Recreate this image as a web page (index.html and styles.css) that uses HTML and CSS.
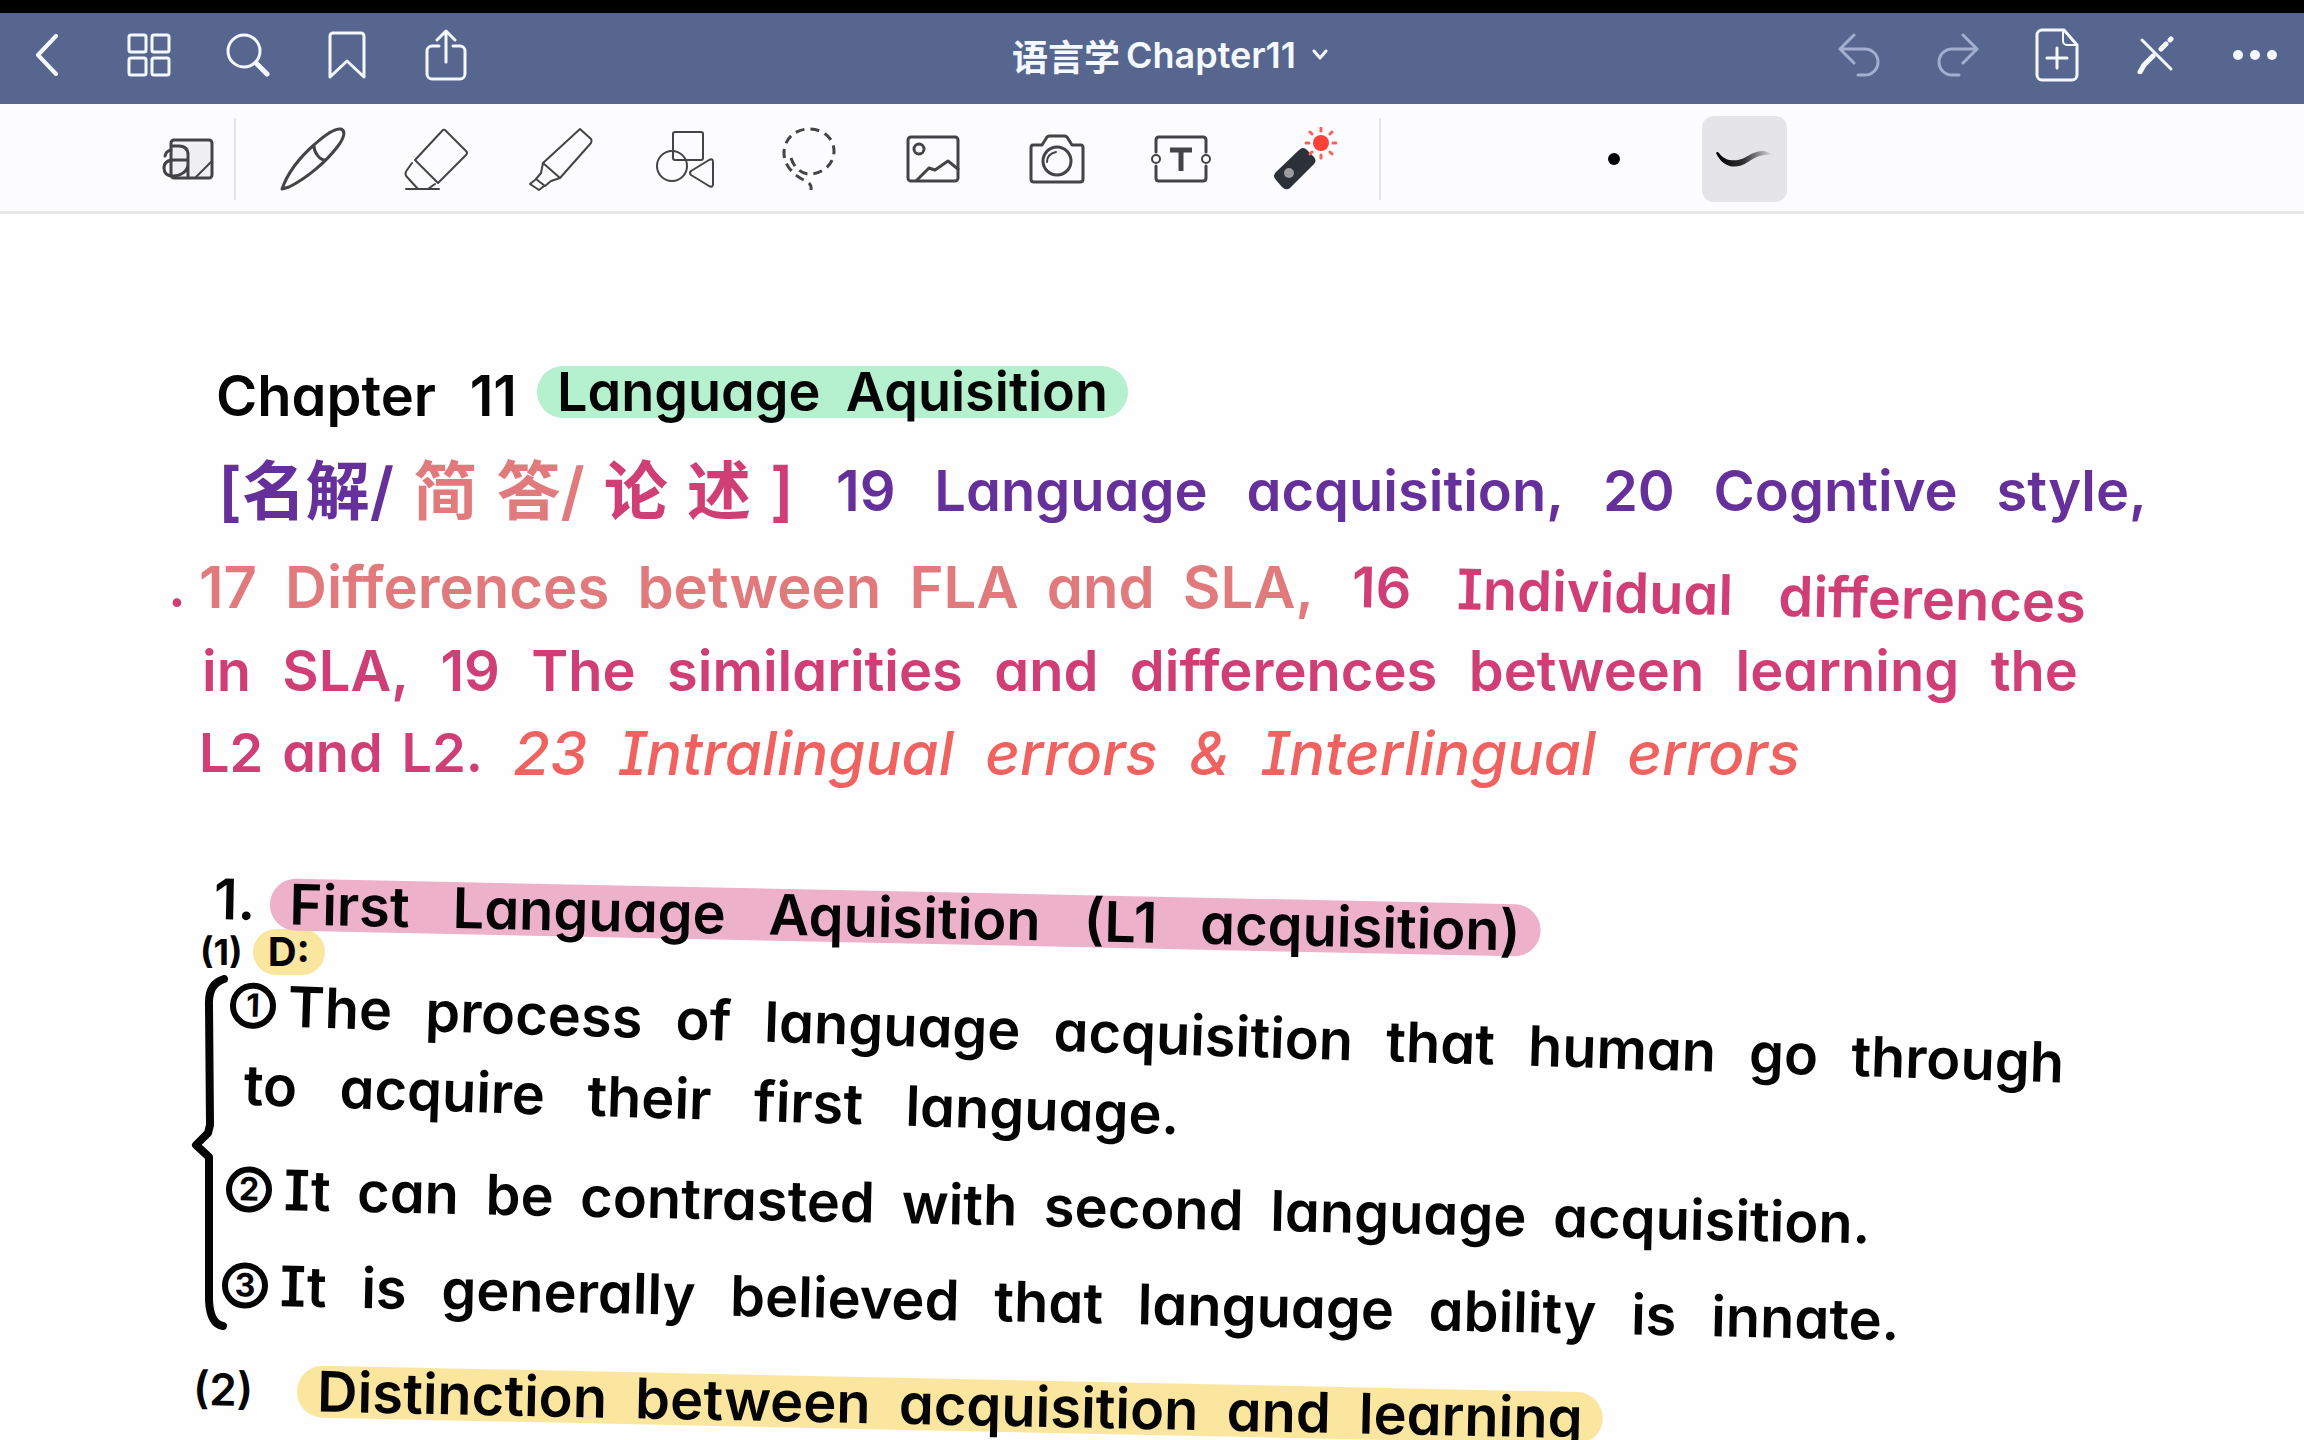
FILE: index.html
```html
<!DOCTYPE html>
<html lang="zh-CN">
<head>
<meta charset="utf-8">
<meta name="viewport" content="width=device-width, initial-scale=1">
<title>语言学Chapter11</title>
<link rel="stylesheet" href="styles.css">
</head>
<body>
<div class="app">
  <header class="topbar">
    <nav class="bar-group" aria-label="Document">
      <button class="bar-btn" aria-label="Back"><svg width="30" height="42" viewBox="0 0 30 42"><path class="bold" d="M21 2 3 21l18 19"/></svg></button>
      <button class="bar-btn" aria-label="Thumbnails"><svg width="44" height="44" viewBox="0 0 44 44"><rect x="2" y="2" width="17" height="17" rx="2"/><rect x="25" y="2" width="17" height="17" rx="2"/><rect x="2" y="25" width="17" height="17" rx="2"/><rect x="25" y="25" width="17" height="17" rx="2"/></svg></button>
      <button class="bar-btn" aria-label="Search"><svg width="44" height="44" viewBox="0 0 44 44"><circle cx="18" cy="18" r="16"/><path class="thick" d="m30 30 11 11"/></svg></button>
      <button class="bar-btn" aria-label="Bookmark"><svg width="38" height="48" viewBox="0 0 38 48"><path d="M2 46V5a3 3 0 0 1 3-3h28a3 3 0 0 1 3 3v41L19 30Z"/></svg></button>
      <button class="bar-btn" aria-label="Share"><svg width="42" height="52" viewBox="0 0 42 52"><path d="M14 17H7a5 5 0 0 0-5 5v23a5 5 0 0 0 5 5h28a5 5 0 0 0 5-5V22a5 5 0 0 0-5-5h-7M21 33V3M12 11l9-9 9 9"/></svg></button>
    </nav>
    <button class="doc-title"><span>语言学</span><span>Chapter11</span><svg width="16" height="12" viewBox="0 0 16 12"><path d="m2 2 6 7 6-7"/></svg></button>
    <nav class="bar-group bar-end" aria-label="Editing">
      <button class="bar-btn" aria-label="Undo" disabled><svg width="44" height="44" viewBox="0 0 44 44"><path d="M17 2 3 16l14 14M3 16h25a13 13 0 0 1 0 26h-7"/></svg></button>
      <button class="bar-btn" aria-label="Redo" disabled><svg width="44" height="44" viewBox="0 0 44 44"><path d="m27 2 14 14-14 14M41 16H16a13 13 0 0 0 0 26h7"/></svg></button>
      <button class="bar-btn" aria-label="Add page"><svg width="44" height="54" viewBox="0 0 44 54"><path d="M7 2h22l13 15v30a5 5 0 0 1-5 5H7a5 5 0 0 1-5-5V7a5 5 0 0 1 5-5Z"/><path class="thin" d="M28 3v10a4 4 0 0 0 4 4h9"/><path d="M22 20v20M12 30h20"/></svg></button>
      <button class="bar-btn" aria-label="Read only mode"><svg width="38" height="38" viewBox="0 0 38 38"><path d="m5 4 29 29"/><path class="thick" d="m3 36 4-7 9-9M24 13l5-5M33 4l1-1"/></svg></button>
      <button class="bar-btn" aria-label="More"><svg class="solid" width="44" height="12" viewBox="0 0 44 12"><circle cx="5" cy="6" r="5"/><circle cx="22" cy="6" r="5"/><circle cx="39" cy="6" r="5"/></svg></button>
    </nav>
  </header>

  <div class="toolbar" role="toolbar" aria-label="Tools">
    <button class="zoom-btn" aria-label="Zoom window"><svg width="52" height="42" viewBox="0 0 52 42"><path d="M9 5a3 3 0 0 1 3-3h35a3 3 0 0 1 3 3v32a3 3 0 0 1-3 3H12a3 3 0 0 1-3-3Z" fill="#f0eff2" class="mid"/><path class="mid" d="M11 8h6q9 0 9 9v22M26 22H12C5 22 2 25 2 30s3 8 9 8c8 0 15-5 15-12M3 18q1-5 6-6"/><path d="M34 39 49 24"/></svg></button>
    <span class="rule"></span>
    <div class="tools">
      <button class="tool" aria-label="Pen"><svg width="66" height="64" viewBox="0 0 66 64"><path class="mid" d="M2 62C8 45 20 30 35 17 46 7 55 1 61 2c5 2 3 9-3 17-12 16-31 32-49 41ZM34 19c0 7 6 14 11 14"/></svg></button>
      <button class="tool" aria-label="Eraser"><svg width="66" height="64" viewBox="0 0 66 64"><path d="M41 3 62 24q2 2 0 4L34 56 11 33 38 4q1-2 3-1ZM8 36l-5 7q-3 4 0 7l11 12M31 57l-7 5M2 62h33"/></svg></button>
      <button class="tool" aria-label="Highlighter"><svg width="66" height="64" viewBox="0 0 66 64"><path d="m52 2 11 10q1 1 0 4L32 51 15 36Z M15 36l-2 10-5 6 9 7 6-5 9-3M7 53l-5 4 9 6 5-4"/></svg></button>
      <button class="tool" aria-label="Shapes"><svg width="60" height="60" viewBox="0 0 60 60"><rect x="18" y="3" width="30" height="28" rx="2"/><circle cx="17" cy="37" r="15"/><path d="M36 42q-2 2 0 4l18 11q4 2 4-2V33q0-4-4-2Z"/></svg></button>
      <button class="tool" aria-label="Lasso"><svg width="56" height="64" viewBox="0 0 56 64"><path class="dashes" d="M10 31c3 10 11 16 18 16 14 0 25-10 25-23S42 2 28 2 3 12 3 26s12 24 22 28q6 3 5 9"/></svg></button>
      <button class="tool" aria-label="Image"><svg width="54" height="48" viewBox="0 0 54 48"><rect class="mid" x="2" y="2" width="50" height="44" rx="3"/><circle class="mid" cx="13" cy="14" r="5"/><path class="mid" d="m11 45 12-12 6 2 13-9 10 8"/></svg></button>
      <button class="tool" aria-label="Camera"><svg width="56" height="50" viewBox="0 0 56 50"><path class="mid" d="M4 11h9l5-8q1-1 3-1h14q2 0 3 1l5 8h9q2 0 2 3v31q0 3-3 3H5q-3 0-3-3V14q0-3 2-3Z"/><circle class="mid" cx="28" cy="27" r="14"/><path d="M18 28q0-8 9-10"/></svg></button>
      <button class="tool" aria-label="Text"><svg width="60" height="48" viewBox="0 0 60 48"><path class="mid" d="M5 17V5q0-3 3-3h44q3 0 3 3v12M5 31v12q0 3 3 3h44q3 0 3-3V31"/><circle cx="5" cy="24" r="4"/><circle cx="55" cy="24" r="4"/><path class="thick" d="M19 15h22M30 15v21"/></svg></button>
      <button class="tool" aria-label="Laser pointer"><svg width="66" height="64" viewBox="0 0 66 64"><path d="m27 23-23 22q-4 4 0 8l6 7q4 4 8 1l24-24q3-3 0-7l-7-7q-4-4-8 0Z" fill="#2c3038" stroke="none"/><circle cx="17" cy="46" r="5" fill="#9a9ca2" stroke="none"/><circle cx="49" cy="16" r="8" fill="#f8423b" stroke="none"/><path class="ray" d="M49 1v3M49 28v3M34 16h3M61 16h3M38 5l2 2M58 25l2 2M60 5l-2 2M40 25l-2 2"/></svg></button>
    </div>
    <span class="rule rule-end"></span>
    <div class="strokes">
      <button class="stroke" aria-label="Dot tip"><svg width="14" height="14" viewBox="0 0 14 14"><circle cx="7" cy="7" r="6" fill="#000" stroke="none"/></svg></button>
      <button class="stroke selected" aria-label="Brush stroke" aria-pressed="true"><svg width="60" height="22" viewBox="0 0 60 22"><defs><linearGradient id="fade"><stop offset="0" stop-color="#000"/><stop offset=".5" stop-color="#333"/><stop offset="1" stop-color="#333" stop-opacity="0"/></linearGradient></defs><path d="M1 5c7 15 20 17 32 9C42 8 48 6 58 7 48 0 41 3 31 9 22 14 10 14 4 5Q2 3 1 5Z" fill="url(#fade)" stroke="none"/></svg></button>
    </div>
  </div>

  <main class="page">
    <h1 class="line title">
      <span class="words chapter"><span>Chapter</span><span>11</span></span>
      <span class="words mark mint"><span>Language</span><span>Aquisition</span></span>
    </h1>

    <section class="topics">
      <p class="line topic-1">
        <span class="words kinds"><span class="violet">[名解/</span><span class="coral">简</span><span class="coral">答/</span><span class="rose">论</span><span class="rose">述</span><span class="rose">]</span></span>
        <span class="words violet"><span>19</span><span>Language</span><span>acquisition,</span><span>20</span><span>Cogntive</span><span>style,</span></span>
      </p>
      <p class="line topic-2">
        <span class="rose speck">.</span>
        <span class="words coral half"><span>17</span><span>Differences</span><span>between</span><span>FLA</span><span>and</span><span>SLA,</span></span>
        <span class="words rose tilt-1"><span>16</span><span>Individual</span><span>differences</span></span>
      </p>
      <p class="line topic-3 rose words"><span>in</span><span>SLA,</span><span>19</span><span>The</span><span>similarities</span><span>and</span><span>differences</span><span>between</span><span>learning</span><span>the</span></p>
      <p class="line topic-4">
        <span class="words rose"><span>L2</span><span>and</span><span>L2.</span></span>
        <span class="words red script"><span>23</span><span>Intralingual</span><span>errors</span><span>&amp;</span><span>Interlingual</span><span>errors</span></span>
      </p>
    </section>

    <section>
      <h2 class="line heading tilt-1">
        <span>1.</span>
        <span class="words mark pink"><span>First</span><span>Language</span><span>Aquisition</span><span>(L1</span><span>acquisition)</span></span>
      </h2>
      <h3 class="sub"><span>(1)</span><span class="mark-dot">D:</span></h3>
      <div class="defs">
        <svg class="brace" width="40" height="356" viewBox="0 0 40 356"><path d="M33 4Q17 9 18 30L19 150 17 158 5 170 18 182V325Q19 349 32 351"/></svg>
        <p class="line def-1 words tilt-2"><span class="lead"><span class="num">1</span>The</span><span>process</span><span>of</span><span>language</span><span>acquisition</span><span>that</span><span>human</span><span>go</span><span>through</span></p>
        <p class="line def-1b words tilt-2"><span>to</span><span>acquire</span><span>their</span><span>first</span><span>language.</span></p>
        <p class="line def-2 words tilt-1"><span class="lead"><span class="num">2</span>It</span><span>can</span><span>be</span><span>contrasted</span><span>with</span><span>second</span><span>language</span><span>acquisition.</span></p>
        <p class="line def-3 words tilt-1"><span class="lead"><span class="num">3</span>It</span><span>is</span><span>generally</span><span>believed</span><span>that</span><span>language</span><span>ability</span><span>is</span><span>innate.</span></p>
      </div>
      <h3 class="line next tilt-1">
        <span class="small">(2)</span>
        <span class="words mark sand"><span>Distinction</span><span>between</span><span>acquisition</span><span>and</span><span>learning</span></span>
      </h3>
    </section>
  </main>
</div>
</body>
</html>
```
FILE: styles.css
```css
* { box-sizing: border-box; }

body {
  margin: 0;
  background: #fefefe;
  color: #050505;
  font-family: Inter, "Noto Sans CJK SC", sans-serif;
}

h1, h2, h3, p { margin: 0; font-size: inherit; font-weight: inherit; }

button {
  display: flex;
  align-items: center;
  justify-content: center;
  padding: 0;
  border: 0;
  background: none;
  color: inherit;
  font: inherit;
}

svg {
  display: block;
  flex: none;
  fill: none;
  stroke: currentColor;
  stroke-width: 2;
  stroke-linecap: round;
  stroke-linejoin: round;
}

.app { display: flex; flex-direction: column; height: 100vh; overflow: hidden; }

/* Top bar */
.topbar {
  display: grid;
  grid-template-columns: 1fr auto 1fr;
  align-items: center;
  flex: none;
  height: 104px;
  padding-bottom: 8px;
  border-top: 13px solid #000;
  background: #57668e;
  color: #f4f8ff;
}
.topbar svg { stroke-width: 3; }
.topbar .bold { stroke-width: 4; }
.topbar .thick { stroke-width: 5; }
.topbar .thin { stroke-width: 2; }
.topbar .solid { fill: currentColor; stroke: none; }
.bar-group { display: flex; }
.bar-end { justify-content: flex-end; }
.bar-btn { width: 99px; height: 80px; }
.bar-btn:disabled { color: #a3afd0; }
.doc-title { gap: 6px; margin-left: 36px; font-size: 36px; font-weight: 600; }
.doc-title svg { margin-left: 10px; }

/* Toolbar */
.toolbar {
  display: flex;
  align-items: center;
  flex: none;
  height: 110px;
  padding: 2px 0 0 162px;
  border-bottom: 3px solid #e6e5e8;
  background: #fcfbfe;
  color: #444448;
}
.toolbar .mid { stroke-width: 3; }
.toolbar .thick { stroke-width: 5; stroke-linecap: butt; }
.toolbar .ray { stroke: #f8625c; stroke-width: 3; }
.toolbar .dashes { stroke-width: 3; stroke-dasharray: 9 6; stroke-linecap: butt; }
.zoom-btn { width: 52px; height: 80px; }
.rule { width: 2px; height: 82px; margin-left: 20px; background: #e4e3e6; }
.tools { display: flex; margin-left: 15px; }
.tool { width: 124px; height: 86px; }
.rule-end { margin-left: 12px; }
.strokes { display: flex; gap: 46px; margin-left: 190px; }
.stroke { width: 85px; height: 86px; border-radius: 12px; }
.selected { background: #e5e4e7; }

/* Handwritten page */
.page {
  flex: 1;
  min-height: 0;
  padding-top: 152px;
  overflow: hidden;
  font-size: 56px;
  font-weight: 600;
  font-feature-settings: "cv11", "cv08";
}
.line {
  display: flex;
  line-height: 60px;
  white-space: nowrap;
}
.words { display: flex; justify-content: space-between; }
.tilt-1 { transform: rotate(1.2deg); transform-origin: 0 50%; }
.tilt-2 { transform: rotate(1.8deg); transform-origin: 0 50%; }

.violet { color: #66309a; }
.coral { color: #e07a7c; }
.rose { color: #cf3e75; }
.red { color: #f0625f; }

.mark { align-self: center; padding: 0 20px; border-radius: 26px; line-height: 52px; }
.mint { background: #b5f0cf; }
.pink { background: #edb1ca; }
.sand { background: #fbe6a0; }

.title { margin-left: 216px; gap: 20px; }
.chapter { width: 301px; }
.title .mark { align-self: flex-start; width: 591px; font-size: 54px; }

.topics { margin: 35px 0 86px; }
.topic-1 { gap: 42px; margin: 0 157px 0 218px; }
.topic-1 .words { flex: 1; }
.topic-1 .kinds { flex: none; width: 576px; font-size: 64px; }
.topic-2 { gap: 16px; margin: 36px 218px 24px 168px; }
.topic-2 .half { width: 1115px; margin-right: 22px; font-size: 58px; }
.topic-2 .tilt-1 { flex: 1; }
.speck { width: 15px; }
.topic-3 { margin: 0 226px 22px 202px; }
.topic-4 { gap: 30px; margin: 0 504px 0 199px; }
.topic-4 .rose { width: 284px; font-size: 54px; }
.script { flex: 1; font-size: 60px; font-style: italic; font-weight: 500; }

.heading { gap: 14px; margin: 0 763px 0 214px; }
.heading .mark { flex: 1; align-self: flex-end; }
.sub { display: flex; gap: 10px; margin-left: 200px; line-height: 46px; font-size: 36px; font-weight: 700; }
.mark-dot { padding: 0 15px; border-radius: 23px; background: #fbe6a0; font-size: 40px; }

.defs { position: relative; }
.brace { position: absolute; left: 191px; top: 0; stroke-width: 8; }
.lead { display: flex; align-items: center; gap: 12px; }
.num {
  width: 46px;
  height: 46px;
  border: 6px solid;
  border-radius: 23px;
  line-height: 34px;
  font-size: 32px;
  font-weight: 700;
  text-align: center;
}
.def-1 { margin: 0 239px 20px 230px; }
.def-1b { width: 936px; margin: 0 0 44px 244px; }
.def-2 { margin: 0 433px 36px 226px; }
.def-3 { margin: 0 404px 44px 222px; }

.next { gap: 44px; margin: 0 701px 0 193px; }
.next .mark { flex: 1; }
.small { font-size: 44px; }
```
